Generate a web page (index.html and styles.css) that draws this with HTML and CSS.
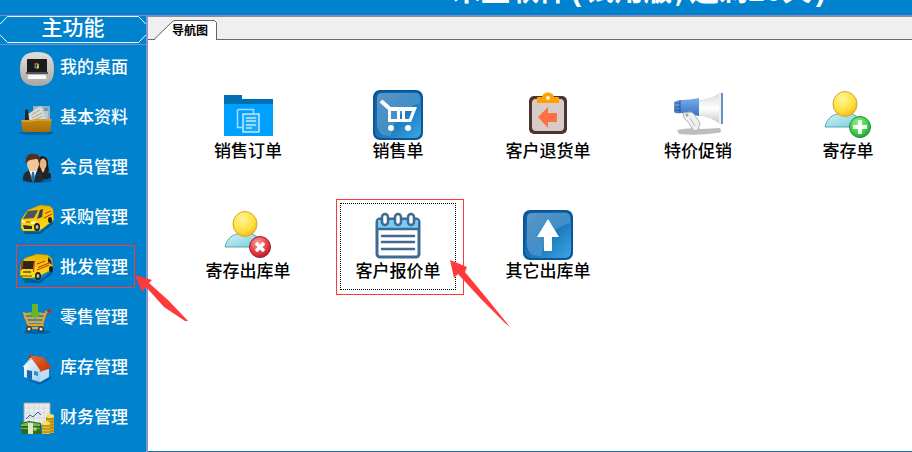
FILE: index.html
```html
<!DOCTYPE html>
<html lang="zh-CN">
<head>
    <meta charset="UTF-8">
    <meta name="viewport" content="width=device-width, initial-scale=1.0">
    <title>导航图</title>
    <link rel="stylesheet" href="styles.css">
</head>
<body>
    <svg class="defs" width="0" height="0" aria-hidden="true">
        <defs>
            <linearGradient id="silver" x1="0" y1="0" x2="0" y2="1"><stop offset="0" stop-color="#e2e0dc"/><stop offset="1" stop-color="#aaa7a2"/></linearGradient>
            <linearGradient id="folder" x1="0" y1="0" x2="0" y2="1"><stop offset="0" stop-color="#c98a12"/><stop offset="1" stop-color="#a86c06"/></linearGradient>
            <linearGradient id="van" x1="0" y1="0" x2="0" y2="1"><stop offset="0" stop-color="#e8b500"/><stop offset="1" stop-color="#ffe21c"/></linearGradient>
            <linearGradient id="roof" x1="0" y1="0" x2="1" y2="1"><stop offset="0" stop-color="#f0682c"/><stop offset="1" stop-color="#b83206"/></linearGradient>
            <linearGradient id="wall" x1="0" y1="0" x2="1" y2="1"><stop offset="0" stop-color="#ffffff"/><stop offset="1" stop-color="#9fcdf2"/></linearGradient>
            <linearGradient id="tile" x1="0" y1="0" x2="1" y2="1"><stop offset="0" stop-color="#0b5ba0"/><stop offset="0.5" stop-color="#1a74b8"/><stop offset="1" stop-color="#3aa6e4"/></linearGradient>
            <linearGradient id="gloss" x1="0" y1="0" x2="1" y2="1"><stop offset="0" stop-color="#8fc0e4" stop-opacity="0.6"/><stop offset="1" stop-color="#8fc0e4" stop-opacity="0.1"/></linearGradient>
            <linearGradient id="horn" x1="0" y1="0" x2="0" y2="1"><stop offset="0" stop-color="#dadcdf"/><stop offset="0.5" stop-color="#ffffff"/><stop offset="1" stop-color="#c3c6ca"/></linearGradient>
            <linearGradient id="hornBlue" x1="0" y1="0" x2="0" y2="1"><stop offset="0" stop-color="#7aaceb"/><stop offset="1" stop-color="#3a72c4"/></linearGradient>
            <radialGradient id="head" cx="0.4" cy="0.3" r="0.8"><stop offset="0" stop-color="#fff59a"/><stop offset="0.6" stop-color="#ffdf3c"/><stop offset="1" stop-color="#e8ae10"/></radialGradient>
            <linearGradient id="torso" x1="0" y1="0" x2="1" y2="1"><stop offset="0" stop-color="#d8f5f8"/><stop offset="1" stop-color="#6cc8d8"/></linearGradient>
            <radialGradient id="green" cx="0.4" cy="0.3" r="0.8"><stop offset="0" stop-color="#8af08a"/><stop offset="0.6" stop-color="#38cf4a"/><stop offset="1" stop-color="#109a26"/></radialGradient>
            <radialGradient id="red" cx="0.4" cy="0.3" r="0.8"><stop offset="0" stop-color="#ff9a94"/><stop offset="0.6" stop-color="#e43a40"/><stop offset="1" stop-color="#a80f1c"/></radialGradient>
        </defs>
    </svg>

    <header class="title-bar">
        <span class="title">禾盈软件(试用版,还剩29天)</span>
    </header>

    <div class="layout">
        <nav class="sidebar">
            <h2 class="sidebar-head">
                <svg class="sidebar-frame" viewBox="0 0 146 29" preserveAspectRatio="none"><path d="M0 8.500L7.500 0.500H138.500L146 8.500M0 19.500L7.500 27.500H138.500L146 19.500"/></svg>
                <span>主功能</span>
            </h2>
            <button class="menu-item" type="button">
                <svg class="menu-icon" viewBox="0 0 34 34">
                    <path d="M17 0C29 0 34 5 34 17S29 34 17 34 0 29 0 17 5 0 17 0z" fill="url(#silver)"/>
                    <rect x="7" y="7" width="20" height="14" rx="1" fill="#1c1c1c"/>
                    <path d="M6 20h22v2H6z" fill="#555"/>
                    <path d="M14.500 11.500l2-1v3h-2z" fill="#ef5a2c"/><path d="M17 11l2 1v2h-2z" fill="#7fc241"/><path d="M14.500 14h2v3l-2-1z" fill="#3f9de0"/><path d="M17 14h2v2l-2 1z" fill="#f6c21c"/>
                    <path d="M8.500 23h17l1 4h-19z" fill="#f8f8f8"/>
                </svg>
                <span>我的桌面</span>
            </button>
            <button class="menu-item" type="button">
                <svg class="menu-icon" viewBox="0 0 34 34">
                    <ellipse cx="17" cy="31" rx="17" ry="2" fill="#04507f" opacity="0.6"/>
                    <path d="M13 4h17v20H13z" fill="#8fb2c8"/><path d="M15 6h13v14H15z" fill="#b4c9d4"/><path d="M24 6h4v3h-4z" fill="#7393a8"/>
                    <path d="M8 12l13-8 5 14-15 6z" fill="#dadad4"/><path d="M11 13l9-5M12 16l10-5M14 18l9-4" stroke="#a9aaa5" fill="none"/>
                    <path d="M5 8l3-1 1 13H5z" fill="#242424"/>
                    <path d="M1 18h11l3-1h17l-2 13H3z" fill="url(#folder)"/><path d="M2 19h10l3-1h16" stroke="#e5b445" fill="none"/>
                </svg>
                <span>基本资料</span>
            </button>
            <button class="menu-item" type="button">
                <svg class="menu-icon" viewBox="0 0 34 34">
                    <ellipse cx="17" cy="28" rx="15" ry="3" fill="#04507f" opacity="0.6"/>
                    <path d="M17 11C17 2 28 2 28 11c0 4 1 5 1 8H18z" fill="#221814"/>
                    <ellipse cx="23" cy="12" rx="3.500" ry="5.500" fill="#e9b689"/>
                    <path d="M18 19l4-2 4 1 5 4v4q-5 2-12 1z" fill="#1e242a"/><path d="M21 17h4l-2 4z" fill="#efc8a4"/>
                    <path d="M3 28c0-8 3-8 7-10h6c4 2 7 3 7 11q-10 3-20-1z" fill="#242b31"/>
                    <path d="M9 18h8l-4 12z" fill="#f4f6f7"/><path d="M12 20h2l1 7-2 3-2-3z" fill="#1671b8"/>
                    <ellipse cx="13" cy="12" rx="6" ry="7.500" fill="#f3c69a"/>
                    <path d="M6 12C5 3 9 1 14 2c6 0 7 5 6 10-1-4-2-5-4-5-4 1-8 0-10 5z" fill="#533019"/>
                </svg>
                <span>会员管理</span>
            </button>
            <button class="menu-item" type="button">
                <svg class="menu-icon" viewBox="0 0 34 34">
                    <path d="M2 26l18 4 13-12v4L20 32H5z" fill="#04406a" opacity="0.6"/>
                    <path d="M1 18l3-5 4-5 12-5 10 1 3 3 1 11-12 9-4 2H3l-2-3z" fill="url(#van)" stroke="#a77c00" stroke-width="0.500"/>
                    <path d="M8 9l10-1-4 8-11 1z" fill="#46555f"/><path d="M20 8l3-1-1 8-5 2z" fill="#33424d"/>
                    <path d="M24 10l8-3v6l-8 4z" fill="#f7c800"/><path d="M25 11.500l6-2.500M24 16l8-4" stroke="#cf2515" fill="none"/>
                    <path d="M3 23l9 1v3H4z" fill="#29313a"/><path d="M2 18l3 1v2l-3-1zM11 20l5-1-1 3h-4z" fill="#fff6ba"/><path d="M6 20h4" stroke="#cf2515"/>
                    <ellipse cx="17" cy="25" rx="3" ry="4" fill="#202020"/><ellipse cx="17" cy="25" rx="1.500" ry="2" fill="#b9b9b9"/>
                    <ellipse cx="30" cy="18" rx="2" ry="3" fill="#202020"/>
                </svg>
                <span>采购管理</span>
            </button>
            <button class="menu-item marked" type="button">
                <svg class="menu-icon" viewBox="0 0 34 34">
                    <path d="M1 24l18 5 14-11v3L20 31H5z" fill="#04406a" opacity="0.6"/>
                    <path d="M0 23l1-12 4-5 12-4 11 1 4 4 1 10-15 8-6 1H3z" fill="url(#van)" stroke="#a77c00" stroke-width="0.500"/>
                    <path d="M3 9h11l-1 8H2z" fill="#30271c"/><path d="M1 9l2-1-1 9-1 2zM14 9h1l-1 11h-1z" fill="#d8281a"/>
                    <path d="M28 5l3 3 1 5-4-3z" fill="#22303c"/>
                    <path d="M17 12l8-3M18 15.500l11-4.500M17 18l12-5" stroke="#cf2515" fill="none"/>
                    <path d="M3 19h8v2H3z" fill="#8a6d18"/><path d="M1 24h11" stroke="#695000"/>
                    <ellipse cx="18" cy="24" rx="3" ry="4" fill="#202020"/><ellipse cx="18" cy="24" rx="1.500" ry="2" fill="#b9b9b9"/>
                    <ellipse cx="31" cy="17" rx="2" ry="3" fill="#202020"/>
                </svg>
                <span>批发管理</span>
                <svg class="pointer pointer-menu" viewBox="0 0 54 47"><path d="M0 0L17 5 14 8 33 25 53 46 50 46 29 32 11 12 7 17z"/></svg>
            </button>
            <button class="menu-item" type="button">
                <svg class="menu-icon" viewBox="0 0 34 34">
                    <ellipse cx="17" cy="30" rx="14" ry="2" fill="#04507f" opacity="0.6"/>
                    <path d="M4 11h21l-3 11H8z" fill="#2b8fc8"/>
                    <path d="M29 9l-3 1-4 13H9M4 12h20M5 16h18M7 20h16M4 11l4 11" stroke="#f5a01c" stroke-width="2" fill="none" stroke-linecap="round"/>
                    <path d="M10 23l-2 3h14l1-3" stroke="#f5a01c" stroke-width="2" fill="none"/>
                    <circle cx="29" cy="9" r="2" fill="#cf2417"/>
                    <path d="M12 2h6v8h4l-7 7-7-7h4z" fill="#6ab52b"/>
                    <circle cx="9" cy="27" r="3" fill="#3c3c3c"/><circle cx="9" cy="27" r="1.500" fill="#e9e9e9"/><circle cx="21" cy="27" r="3" fill="#3c3c3c"/><circle cx="21" cy="27" r="1.500" fill="#e9e9e9"/>
                </svg>
                <span>零售管理</span>
            </button>
            <button class="menu-item" type="button">
                <svg class="menu-icon" viewBox="0 0 34 34">
                    <path d="M3 26l17 5 11-7v3l-11 6z" fill="#04507f" opacity="0.600"/>
                    <path d="M9 3h4v6H9z" fill="#c33a12"/>
                    <path d="M4 14l7-7 9 11v12L4 25z" fill="url(#wall)"/><path d="M20 18l9-4v11l-9 5z" fill="#c0dcf5"/>
                    <path d="M11 4l12 1 9 11-10 3-2 1z" fill="url(#roof)"/><path d="M3 15l8-9 9 13" stroke="#f4ede8" fill="none"/>
                    <path d="M7 18l5 1v9l-5-2z" fill="#1868b4"/><path d="M14 19l4 1v4l-4-1z" fill="#2f8ad6"/>
                </svg>
                <span>库存管理</span>
            </button>
            <button class="menu-item" type="button">
                <svg class="menu-icon" viewBox="0 0 34 34">
                    <path d="M4 1h26v22H4z" fill="#e9ebec" stroke="#a3a7a8"/>
                    <path d="M9 2v20M14 2v20M19 2v20M24 2v20M5 6h24M5 11h24M5 16h24" stroke="#d6dadc" fill="none"/>
                    <path d="M6 17l4-4 3 2 5-5 3 3" stroke="#2667ad" fill="none"/>
                    <path d="M0 21l9-2 12 2v11H2z" fill="#2e6c1b"/><path d="M1 22l8-2 11 2v2H1zM1 26h19v1H1z" fill="#76b452"/><path d="M8 21h5v11H8z" fill="#dce8c8"/><circle cx="15" cy="27" r="2" fill="#9acb73"/>
                    <path d="M26 14h8v17h-8z" fill="#d7a61c"/><path d="M22 21h8v11h-8z" fill="#e8bd2d"/>
                    <path d="M26 17h8M26 20h8M30 23h4M30 26h4M30 29h4M22 24h8M22 27h8M22 30h8" stroke="#a1760b" fill="none"/>
                    <ellipse cx="30" cy="14" rx="4" ry="2" fill="#f7dd6d"/><ellipse cx="26" cy="21" rx="4" ry="2" fill="#f7dd6d"/>
                </svg>
                <span>财务管理</span>
            </button>
        </nav>

        <main class="content">
            <div class="tabs">
                <button class="tab" type="button">
                    <svg class="tab-shape" viewBox="0 0 64 21"><path d="M0 20.500L18.500 1.500Q20 0.500 21 0.500H60.500L62.500 2.500V20.500V21H0z" fill="#fff"/><path d="M0 19.500L18.500 1.500Q20 0.500 21 0.500H60.500L62.500 2.500V20" fill="none" stroke="#646464"/></svg>
                    <span>导航图</span>
                </button>
            </div>
            <div class="shortcuts">
                <button class="shortcut" type="button">
                    <svg class="shortcut-icon" viewBox="0 0 50 50">
                        <path d="M1 5h18v4h31v7H1z" fill="#0070b4"/><path d="M1 14h49v32H1z" fill="#00a0ff"/>
                        <path d="M14.500 19.500h16v4M14.500 19.500v18h5" fill="none" stroke="#a5dcff" stroke-width="1.500"/>
                        <path d="M20 24h16v18H20z" fill="#18a8ff" stroke="#c4e9ff" stroke-width="1.500"/>
                        <path d="M23 28h10M23 31h10M23 35h10M23 38h6" stroke="#c4e9ff" stroke-width="1.500"/>
                    </svg>
                    <span>销售订单</span>
                </button>
                <button class="shortcut" type="button">
                    <svg class="shortcut-icon" viewBox="0 0 50 50">
                        <rect width="50" height="50" rx="7" fill="#0b5696"/><rect x="2" y="2" width="46" height="46" rx="6" fill="url(#tile)"/>
                        <path d="M4 8q0-5 5-5h33q5 0 5 5v5Q22 20 18 46L9 45q-5-5-5-11z" fill="url(#gloss)"/>
                        <path d="M8 11l9 8" stroke="#fff" stroke-width="4"/>
                        <path d="M15 17h29l-6 15H15zM18 21v8h6v-8zM27 21v8h2v-8zM32 21v8h4l3-8z" fill="#fff" fill-rule="evenodd"/>
                        <circle cx="18" cy="38" r="3" fill="#fff"/><circle cx="35" cy="38" r="3" fill="#fff"/>
                    </svg>
                    <span>销售单</span>
                </button>
                <button class="shortcut" type="button">
                    <svg class="shortcut-icon" viewBox="0 0 50 50">
                        <rect x="6" y="6" width="38" height="38" rx="5" fill="#4e342e"/><rect x="9" y="9" width="32" height="32" rx="4" fill="#d7ccc8"/>
                        <path d="M14 7h5c1-6 11-6 12 0h5v6H14z" fill="#ffa000"/><circle cx="25" cy="8" r="2" fill="#fff4d8"/>
                        <path d="M15 27l10-10v6h9v9h-9v6z" fill="#ff7043"/>
                    </svg>
                    <span>客户退货单</span>
                </button>
                <button class="shortcut" type="button">
                    <svg class="shortcut-icon" viewBox="0 0 50 50">
                        <path d="M4 40q14-3 25-1l18-1q3 5-3 5-20 3-38 1z" fill="#bdbdbd"/>
                        <path d="M24 11q13-1 22-7l3-1v31l-3-1q-9-7-22-8z" fill="url(#horn)" stroke="#c7c9cb" stroke-width="0.500"/>
                        <path d="M46 4l3-1v31l-3-1z" fill="#eef2f6"/><path d="M49 3v31" stroke="#386fb6" stroke-width="1.500"/>
                        <path d="M1 12q3-2 7-2 9 0 18-2v18q-9-2-18-3-5 1-7-1z" fill="url(#hornBlue)"/><path d="M7 10v13M2 13h5M2 17h5M2 20h5" stroke="#275793" fill="none"/>
                        <path d="M10 23l8-1 3 2 6 9-2 7-4 1-5-8-5-5z" fill="#eef0f1" stroke="#aeb2b5"/><circle cx="14" cy="25" r="1.500" fill="#9aa0a4"/><path d="M17 28l5 8" stroke="#b4b8bb" fill="none"/>
                    </svg>
                    <span>特价促销</span>
                </button>
                <button class="shortcut" type="button">
                    <svg class="shortcut-icon" viewBox="0 0 50 50">
                        <path d="M2 37c2-11 11-14 20-14s15 4 18 14z" fill="url(#torso)" stroke="#55acb6"/>
                        <ellipse cx="22" cy="14" rx="12" ry="12.500" fill="url(#head)" stroke="#d9a535"/>
                        <circle cx="37" cy="37" r="10.500" fill="url(#green)" stroke="#238a30"/><path d="M37 30v14M30 37h14" stroke="#fff" stroke-width="4"/>
                    </svg>
                    <span>寄存单</span>
                </button>
                <button class="shortcut" type="button">
                    <svg class="shortcut-icon" viewBox="0 0 50 50">
                        <path d="M2 37c2-11 11-14 20-14s15 4 18 14z" fill="url(#torso)" stroke="#55acb6"/>
                        <ellipse cx="22" cy="14" rx="12" ry="12.500" fill="url(#head)" stroke="#d9a535"/>
                        <circle cx="37" cy="37" r="10.500" fill="url(#red)" stroke="#93202c"/><path d="M33 33l8 8M41 33l-8 8" stroke="#fff" stroke-width="3.500"/>
                    </svg>
                    <span>寄存出库单</span>
                </button>
                <button class="shortcut selected" type="button">
                    <svg class="shortcut-icon" viewBox="0 0 50 50">
                        <rect x="4" y="9" width="42" height="38" rx="3" fill="#fff" stroke="#3f6a91" stroke-width="3"/>
                        <path d="M5 10h40v9H5z" fill="#73cff5"/><path d="M4 19h42" stroke="#3f6a91" stroke-width="2.500"/>
                        <g fill="#fff" stroke="#3f6a91" stroke-width="2.500"><rect x="9" y="4" width="6" height="11" rx="3"/><rect x="22" y="4" width="6" height="11" rx="3"/><rect x="35" y="4" width="6" height="11" rx="3"/></g>
                        <path d="M9 26h32M9 32h32M9 39h32" stroke="#3f6a91" stroke-width="2.500" stroke-linecap="round"/>
                    </svg>
                    <span>客户报价单</span>
                    <svg class="pointer pointer-shortcut" viewBox="0 0 61 68"><path d="M0 0L17 7 15 12 39 41 60 67 56 64 31 39 8 14 4 18z"/></svg>
                </button>
                <button class="shortcut" type="button">
                    <svg class="shortcut-icon" viewBox="0 0 50 50">
                        <rect width="50" height="50" rx="7" fill="#0b5696"/><rect x="2" y="2" width="46" height="46" rx="6" fill="url(#tile)"/>
                        <path d="M4 8q0-5 5-5h33q5 0 5 5v5Q22 20 18 46L9 45q-5-5-5-11z" fill="url(#gloss)"/>
                        <path d="M25 9l11 18h-7v14h-8V27h-7z" fill="#fff"/>
                    </svg>
                    <span>其它出库单</span>
                </button>
            </div>
        </main>
    </div>
</body>
</html>
```

FILE: styles.css
```css
*,
*::before,
*::after {
    box-sizing: border-box;
}

body {
    margin: 0;
    min-height: 100vh;
    display: flex;
    flex-direction: column;
    font-family: "Noto Sans CJK SC", sans-serif;
    background: #fff;
    color: #000;
}

button {
    border: none;
    padding: 0;
    background: none;
    color: inherit;
    font-family: inherit;
    cursor: pointer;
}

.defs {
    position: absolute;
}

/* Top bar, the title is cut off by the window edge */
.title-bar {
    height: 16px;
    padding-left: 452px;
    display: flex;
    align-items: flex-end;
    overflow: hidden;
    background: #0082ce;
    border-bottom: 1px solid #8088bc;
    color: #fff;
}

.title {
    padding-bottom: 5px;
    font-family: "Liberation Mono", "Noto Sans CJK SC", monospace;
    font-size: 29px;
    font-weight: bold;
    line-height: 32px;
    white-space: nowrap;
}

.layout {
    flex: 1;
    display: flex;
}

/* Sidebar */
.sidebar {
    width: 148px;
    flex-shrink: 0;
    background: #0082ce;
    border-right: 2px solid #8494cc;
    color: #fff;
}

.sidebar-head {
    position: relative;
    height: 29px;
    margin: 0;
    padding-bottom: 8px;
    display: flex;
    justify-content: center;
    align-items: center;
    border-bottom: 1px solid #6e8fcc;
    font-size: 21px;
    font-weight: 500;
    line-height: 20px;
}

.sidebar-frame {
    position: absolute;
    top: 0;
    left: 0;
    width: 100%;
    height: 100%;
    fill: none;
    stroke: #fff;
}

.menu-item {
    position: relative;
    width: 100%;
    height: 50px;
    padding: 0 0 2px 20px;
    display: flex;
    align-items: center;
    gap: 6px;
    font-size: 17px;
    font-weight: 500;
    line-height: 20px;
}

.menu-item span {
    padding-bottom: 6px;
}

.menu-icon {
    width: 34px;
    height: 34px;
}

.marked::after {
    content: "";
    position: absolute;
    top: 0;
    left: 16px;
    width: 119px;
    height: 43px;
    border: 1px solid #ff3a3a;
}

.pointer {
    position: absolute;
    z-index: 1;
    fill: #ff3a3a;
}

.pointer-menu {
    top: 30px;
    left: 135px;
    width: 54px;
    height: 47px;
}

/* Content */
.content {
    flex: 1;
    min-width: 0;
    border-top: 1px solid #8c8c94;
    border-bottom: 1px solid #0d78b4;
}

.tabs {
    height: 23px;
    padding: 3px 0 0 6px;
    background: #efefef;
    border-bottom: 1px solid #6a6a6a;
}

.tab {
    position: relative;
    width: 64px;
    height: 21px;
    padding: 0 0 2px 18px;
    display: flex;
    align-items: center;
    font-size: 12px;
    font-weight: bold;
    line-height: 18px;
}

.tab-shape {
    position: absolute;
    top: 0;
    left: 0;
    width: 64px;
    height: 21px;
}

.tab span {
    position: relative;
}

.shortcuts {
    padding: 43px 0 32px 42px;
    display: grid;
    grid-template-columns: repeat(auto-fill, 116px);
    gap: 33px 34px;
}

.shortcut {
    position: relative;
    height: 87px;
    padding-top: 7px;
    display: flex;
    flex-direction: column;
    align-items: center;
    font-size: 17px;
    font-weight: 500;
    line-height: 20px;
}

.shortcut-icon {
    width: 50px;
    height: 50px;
}

.selected {
    outline: 1px dotted #000;
    outline-offset: -1px;
}

.selected::after {
    content: "";
    position: absolute;
    top: -4px;
    left: -4px;
    width: 128px;
    height: 96px;
    border: 1px solid #ff3a3a;
}

.pointer-shortcut {
    top: 57px;
    left: 110px;
    width: 61px;
    height: 68px;
}
```
